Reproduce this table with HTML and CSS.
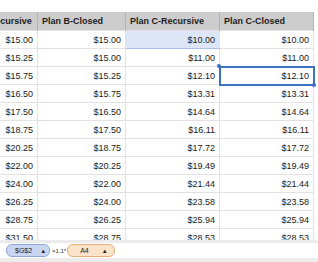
FILE: index.html
```html
<!DOCTYPE html>
<html>
<head>
<meta charset="utf-8">
<link rel="stylesheet" href="styles.css">
</head>
<body>
<div class="app">
  <div class="sheet">
    <table class="grid">
      <colgroup><col class="ca"><col class="cb"><col class="cc"><col class="cd"></colgroup>
      <thead>
        <tr><th>Plan A-Recursive</th><th>Plan B-Closed</th><th>Plan C-Recursive</th><th>Plan C-Closed</th></tr>
      </thead>
      <tbody>
        <tr><td>$15.00</td><td>$15.00</td><td class="hl">$10.00</td><td>$10.00</td></tr>
        <tr><td>$15.25</td><td>$15.00</td><td>$11.00</td><td>$11.00</td></tr>
        <tr><td>$15.75</td><td>$15.25</td><td>$12.10</td><td class="sel">$12.10<span class="dot tl"></span><span class="dot br"></span></td></tr>
        <tr><td>$16.50</td><td>$15.75</td><td>$13.31</td><td>$13.31</td></tr>
        <tr><td>$17.50</td><td>$16.50</td><td>$14.64</td><td>$14.64</td></tr>
        <tr><td>$18.75</td><td>$17.50</td><td>$16.11</td><td>$16.11</td></tr>
        <tr><td>$20.25</td><td>$18.75</td><td>$17.72</td><td>$17.72</td></tr>
        <tr><td>$22.00</td><td>$20.25</td><td>$19.49</td><td>$19.49</td></tr>
        <tr><td>$24.00</td><td>$22.00</td><td>$21.44</td><td>$21.44</td></tr>
        <tr><td>$26.25</td><td>$24.00</td><td>$23.58</td><td>$23.58</td></tr>
        <tr><td>$28.75</td><td>$26.25</td><td>$25.94</td><td>$25.94</td></tr>
        <tr><td>$31.50</td><td>$28.75</td><td>$28.53</td><td>$28.53</td></tr>
      </tbody>
    </table>
  </div>
  <div class="formula">
    <span class="tok blue">$G$2<span class="tri">▲</span></span>
    <span class="op">×1.1*</span>
    <span class="tok orange">A4<span class="tri">▲</span></span>
  </div>
</div>
</body>
</html>
```
FILE: styles.css
```css
html, body {
  margin: 0;
  padding: 0;
  background: #ffffff;
}
.app {
  width: 318px;
  height: 262px;
  display: flex;
  flex-direction: column;
  overflow: hidden;
  font-family: "Liberation Sans", Arial, Helvetica, sans-serif;
  color: #1a1a1a;
}
.sheet {
  flex: 1;
  overflow: hidden;
  padding-top: 12px;
}
.grid {
  border-collapse: collapse;
  table-layout: fixed;
  margin-left: -47px;
  width: 360px;
  font-size: 9px;
}
.ca { width: 84px; }
.cb { width: 88px; }
.cc { width: 94px; }
.cd { width: 94px; }
.grid th {
  height: 18px;
  padding: 0 4px;
  text-align: left;
  font-weight: bold;
  background: #cdcdcd;
  border-left: 1px solid #b4b4b4;
  border-right: 1px solid #b4b4b4;
  white-space: nowrap;
  overflow: hidden;
  color: #1c1c1c;
}
.grid td {
  height: 17px;
  padding: 0 4px;
  text-align: right;
  border: 1px solid #e2e2e2;
  white-space: nowrap;
  position: relative;
}
.grid td.hl {
  background: #dde6f6;
  border-left: 1px solid #a9bfe6;
  border-bottom: 1px solid #a9bfe6;
}
.grid td.sel {
  outline: 2px solid #3c71c2;
  outline-offset: -1px;
}
.dot {
  position: absolute;
  width: 4px;
  height: 4px;
  border-radius: 50%;
  background: #3c71c2;
}
.dot.tl { left: -3px; top: -3px; }
.dot.br { right: -3px; bottom: -3px; }
.formula {
  height: 15px;
  flex: none;
  border-top: 3px solid #ececec;
  border-bottom: 4px solid #ececec;
  background: #ffffff;
  display: flex;
  align-items: center;
  padding-left: 6px;
  font-size: 7px;
}
.tok {
  display: inline-flex;
  align-items: center;
  height: 11px;
  border-radius: 6px;
  padding: 0 5px 0 8px;
  gap: 8px;
  color: #222;
}
.tok.blue {
  width: 29px;
  background: #c8d6f1;
  border: 1px solid #8ea7d9;
}
.tok.orange {
  width: 29px;
  background: #fbe3c9;
  border: 1px solid #e4ae7a;
  padding-left: 12px;
  gap: 13px;
}
.tri {
  font-size: 6px;
}
.op {
  margin: 0 1px 0 2px;
  font-size: 6px;
  color: #333;
}
```
